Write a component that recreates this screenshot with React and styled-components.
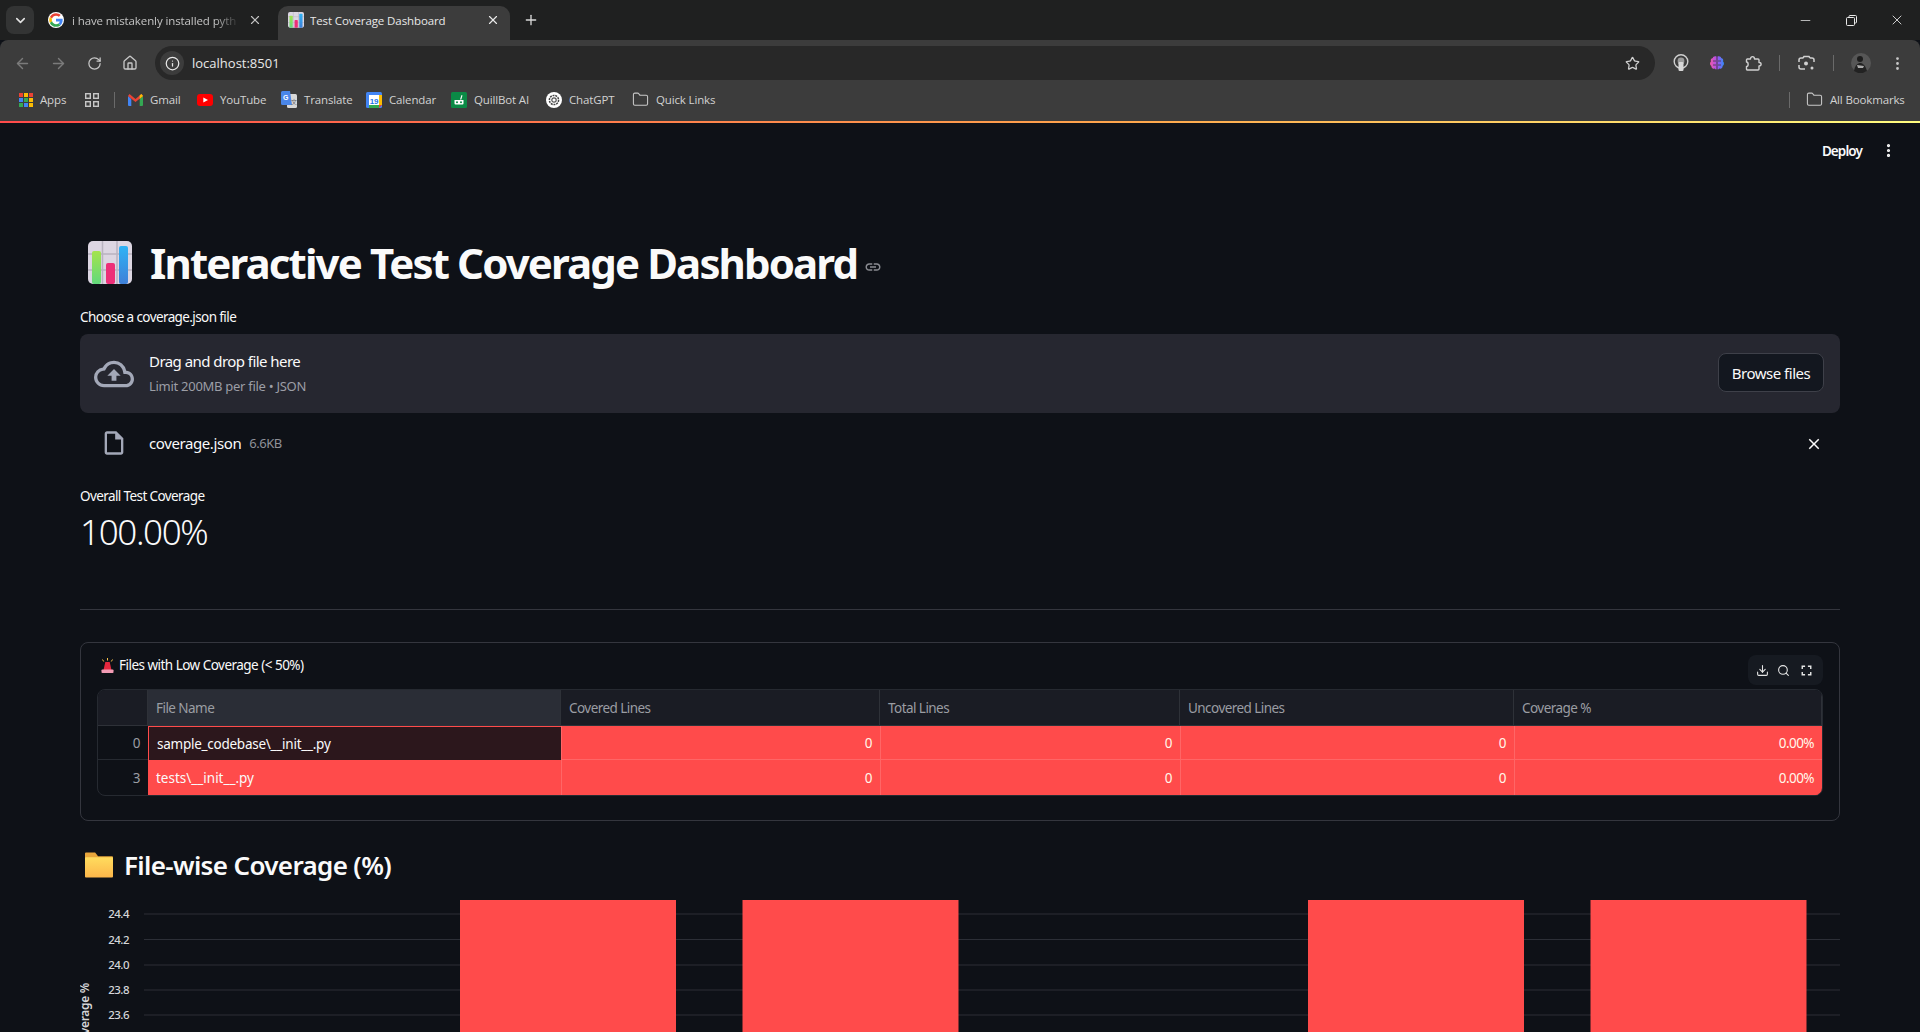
import styled, { createGlobalStyle } from "styled-components";
import {
  ArrowLeft,
  ArrowRight,
  RotateCw,
  House,
  Info,
  Star,
  Folder,
  X,
  Plus,
  ChevronDown,
  Minus,
  EllipsisVertical,
  Search,
} from "lucide-react";
import {
  MdOutlineCloudUpload,
  MdOutlineInsertDriveFile,
  MdClose,
  MdLink,
  MdFullscreen,
} from "react-icons/md";
import { LuDownload } from "react-icons/lu";

const GlobalStyle = createGlobalStyle`
  html, body {
    margin: 0;
    height: 1032px;
    overflow: hidden;
    background: #0e1117;
  }
  * { box-sizing: border-box; }
`;

const APP_FONT = `"Noto Sans", "Open Sans", sans-serif`;
const CHROME_FONT = `"Open Sans", "Noto Sans", sans-serif`;

const Page = styled.div`
  width: 1920px;
  height: 1032px;
  overflow: hidden;
  display: flex;
  flex-direction: column;
  background: #0e1117;
  font-family: ${APP_FONT};
  color: #fafafa;

  & > * {
    flex-shrink: 0;
  }
`;

/* browser frame */
const TabStrip = styled.div`
  height: 40px;
  background: #1f2020;
  display: flex;
  align-items: flex-end;
  padding-left: 6px;
  font-family: ${CHROME_FONT};
`;

const TabSwitcher = styled.div`
  width: 28px;
  height: 28px;
  margin-bottom: 6px;
  border-radius: 8px;
  background: #333434;
  color: #e3e3e3;
  display: flex;
  align-items: center;
  justify-content: center;
`;

const Tab = styled.div`
  width: ${(p) => p.$w}px;
  height: 34px;
  padding: 0 ${(p) => p.$pr}px 6px ${(p) => p.$pl}px;
  border-radius: 10px 10px 0 0;
  background: ${(p) => (p.$active ? "#3c3c3c" : "transparent")};
  display: flex;
  align-items: center;
  gap: ${(p) => (p.$active ? 6 : 8)}px;
  font-size: 11.5px;
  letter-spacing: -0.1px;
  color: ${(p) => (p.$active ? "#e8e8e8" : "#c4c4c4")};
`;

const TabTitle = styled.span`
  flex: 1;
  overflow: hidden;
  white-space: nowrap;
  ${(p) =>
    p.$fade &&
    "mask-image: linear-gradient(90deg, #000 85%, transparent 100%);"}
`;

const NewTab = styled.div`
  margin: 0 0 6px 11px;
  height: 28px;
  width: 20px;
  display: flex;
  align-items: center;
  justify-content: center;
  color: #d8d8d8;
`;

const WindowButtons = styled.div`
  margin-left: auto;
  height: 40px;
  display: flex;
  align-items: center;
  color: #e8e8e8;
`;

const WindowButton = styled.div`
  width: 46px;
  display: flex;
  justify-content: center;
`;

const Toolbar = styled.div`
  height: 40px;
  background: #3c3c3c;
  border-radius: 8px 8px 0 0;
  display: flex;
  align-items: center;
  padding: 6px 0 0 13px;
  font-family: ${CHROME_FONT};
`;

const NavButton = styled.div`
  width: 18px;
  margin-right: ${(p) => p.$mr}px;
  display: flex;
  justify-content: center;
  color: ${(p) => (p.$dim ? "#7b7b7b" : "#c7c7c7")};
`;

const Omnibox = styled.div`
  width: 1500px;
  height: 34px;
  margin-left: 8px;
  border-radius: 17px;
  background: #282828;
  display: flex;
  align-items: center;
  padding: 0 15px 0 5px;
  font-size: 13px;
  color: #e8e8e8;
`;

const SiteInfo = styled.div`
  width: 24px;
  height: 24px;
  margin-right: 8px;
  border-radius: 50%;
  background: #3c3c3c;
  display: flex;
  align-items: center;
  justify-content: center;
`;

const Address = styled.span`
  flex: 1;
`;

const ExtIcons = styled.div`
  display: flex;
  align-items: center;
  color: #c7c7c7;
`;

const ExtIcon = styled.div`
  width: ${(p) => p.$w || 36}px;
  display: flex;
  justify-content: center;
`;

const ToolbarSep = styled.div`
  width: 1px;
  height: 16px;
  background: #6a6a6a;
`;

const Bookmarks = styled.div`
  height: 41px;
  background: #3c3c3c;
  display: flex;
  align-items: center;
  padding: 0 14px 2px 19px;
  font-family: ${CHROME_FONT};
  font-size: 11.5px;
  letter-spacing: -0.15px;
  color: #d2d2d2;
`;

const Bookmark = styled.div`
  width: ${(p) => p.$w}px;
  display: flex;
  align-items: center;
  gap: ${(p) => p.$gap || 7}px;
  white-space: nowrap;
`;

const BookmarkSep = styled.div`
  width: 1px;
  height: 16px;
  background: #6a6a6a;
  margin: ${(p) => p.$m};
`;

const Spacer = styled.div`
  flex: 1;
`;

const GradientLine = styled.div`
  height: 2px;
  background: linear-gradient(90deg, #ff4b4b, #ffa94d 60%, #fffd80);
`;

/* streamlit app */
const AppHeader = styled.div`
  height: 55px;
  display: flex;
  align-items: center;
  justify-content: flex-end;
  padding-right: 23px;
  gap: 18px;
  font-size: 13.5px;
  font-weight: 600;
  letter-spacing: -0.9px;
`;

const Content = styled.main`
  padding: 0 80px;
  display: flex;
  flex-direction: column;
`;

const TitleRow = styled.div`
  margin-top: 62px;
  height: 46px;
  display: flex;
  align-items: center;
  padding-left: 8px;
`;

const Title = styled.h1`
  margin: 0 0 0 18px;
  font-size: 42px;
  line-height: 46px;
  font-weight: 700;
  letter-spacing: -1.88px;
  white-space: nowrap;
`;

const Anchor = styled.span`
  display: flex;
  margin: 8px 0 0 7px;
  color: #8a8c92;
`;

const FieldLabel = styled.div`
  margin-top: 21px;
  height: 20px;
  line-height: 20px;
  font-size: 13.5px;
  letter-spacing: -0.6px;
`;

const Dropzone = styled.div`
  margin-top: 7px;
  height: 79px;
  border-radius: 8px;
  background: #262730;
  display: flex;
  align-items: center;
  padding: 0 16px 0 14px;
`;

const DropIcon = styled.div`
  width: 40px;
  height: 40px;
  margin-right: 15px;
  color: #a3a8b8;
`;

const DropText = styled.div`
  flex: 1;
  display: flex;
  flex-direction: column;
  gap: 4px;
`;

const DropTitle = styled.div`
  font-size: 15px;
  line-height: 21px;
  letter-spacing: -0.55px;
`;

const DropHint = styled.div`
  font-size: 13px;
  line-height: 20px;
  letter-spacing: -0.28px;
  color: #9c9ea6;
`;

const BrowseButton = styled.button`
  width: 106px;
  height: 39px;
  margin-bottom: 2px;
  border: 1px solid #3e4049;
  border-radius: 8px;
  background: #13171f;
  color: #fafafa;
  font-family: ${APP_FONT};
  font-size: 15px;
  letter-spacing: -0.5px;
`;

const FileRow = styled.div`
  margin-top: 13px;
  height: 34px;
  display: flex;
  align-items: center;
  padding: 0 17px 0 20px;
`;

const FileIcon = styled.div`
  width: 28px;
  height: 28px;
  margin-right: 21px;
  color: #a3a8b8;
`;

const FileName = styled.span`
  font-size: 15px;
  letter-spacing: -0.4px;
`;

const FileSize = styled.span`
  margin: 0 0 0 8px;
  font-size: 13px;
  letter-spacing: -0.5px;
  color: #8e9097;
`;

const RemoveFile = styled.div`
  margin: 2px 0 0 auto;
  display: flex;
  color: #fafafa;
`;

const MetricLabel = styled.div`
  margin-top: 26px;
  height: 20px;
  line-height: 20px;
  font-size: 13.5px;
  letter-spacing: -0.6px;
`;

const MetricValue = styled.div`
  margin-top: 3px;
  height: 46px;
  line-height: 46px;
  font-size: 35px;
  font-weight: 300;
  letter-spacing: -1.35px;
`;

const Divider = styled.hr`
  margin: 54px 0 0;
  border: 0;
  border-top: 1px solid #34363e;
`;

const Card = styled.section`
  margin-top: 32px;
  height: 179px;
  border: 1px solid #34363e;
  border-radius: 8px;
  padding: 12px 16px 0;
  display: flex;
  flex-direction: column;
`;

const CardHead = styled.div`
  height: 34px;
  display: flex;
  align-items: flex-start;
`;

const CardTitle = styled.div`
  display: flex;
  align-items: center;
  height: 20px;
  gap: 5px;
  padding-left: 4px;
  font-size: 13.5px;
  letter-spacing: -0.52px;
`;

const TableTools = styled.div`
  margin-left: auto;
  width: 75px;
  height: 30px;
  border-radius: 8px;
  background: #161a21;
  display: flex;
  align-items: center;
  justify-content: space-around;
  padding: 0 4px;
  color: #e6e6e6;
`;

const Grid = styled.div`
  display: grid;
  grid-template-columns: 50px 413px 319px 300px 334px 1fr;
  grid-template-rows: 36px 34px 35px;
  border: 1px solid #262a31;
  border-radius: 8px;
  overflow: hidden;
  font-size: 13.5px;
  letter-spacing: -0.55px;
`;

const HeadCell = styled.div`
  display: flex;
  align-items: center;
  padding: 0 8px;
  background: ${(p) => (p.$sel ? "#2a2d36" : "#1a1c24")};
  color: #9b9da3;
  border-right: 1px solid #2e3138;
  border-bottom: 1px solid #2e3138;
  &:last-child { border-right: 0; }
`;

const IndexCell = styled.div`
  display: flex;
  align-items: center;
  justify-content: flex-end;
  padding: 0 8px;
  color: #9b9da3;
  border-bottom: 1px solid #262a31;
  &:nth-last-child(6) { border-bottom: 0; }
`;

const NameCell = styled.div`
  display: flex;
  align-items: center;
  padding: 0 8px;
  white-space: nowrap;
  letter-spacing: ${(p) => p.$ls}px;
  background: ${(p) => (p.$sel ? "#2c171c" : "#ff4b4b")};
  border: ${(p) => (p.$sel ? "1px solid #ff4b4b" : "0")};
  border-bottom: 0;
  border-right: 0;
  color: #fafafa;
`;

const ValueCell = styled.div`
  display: flex;
  align-items: center;
  justify-content: flex-end;
  padding: 0 8px;
  background: #ff4b4b;
  color: #fff8ea;
  box-shadow: inset 1px 0 0 #ff6666, inset 0 -1px 0 ${(p) => (p.$last ? "#ff4b4b" : "#ff6666")};
`;

const SectionTitle = styled.h3`
  margin: 24px 0 0;
  height: 40px;
  display: flex;
  align-items: center;
  gap: 11px;
  padding-left: 5px;
  font-size: 26px;
  font-weight: 600;
  letter-spacing: -0.65px;
  white-space: nowrap;
`;

const Chart = styled.svg`
  display: block;
  margin-top: 15px;
  flex-shrink: 0;
  font-family: ${APP_FONT};
`;

const GoogleIcon = () => (
  <svg width="16" height="16" viewBox="0 0 48 48">
    <circle cx="24" cy="24" r="24" fill="#fff" />
    <path fill="#EA4335" d="M24 11c3.4 0 6.3 1.2 8.6 3.3l5.5-5.5C34.6 5.6 29.8 3.5 24 3.5 16 3.5 9.1 8.100 5.700 14.800l6.500 5C13.800 14.800 18.500 11 24 11z" />
    <path fill="#4285F4" d="M44 24.500c0-1.400-.1-2.800-.4-4H24v7.700h11.300c-.5 2.600-2 4.800-4.200 6.300l6.400 5C41.300 36 44 30.800 44 24.500z" />
    <path fill="#FBBC05" d="M12.200 28.200c-.4-1.200-.7-2.600-.7-4s.3-2.800.7-4l-6.500-5C4.300 18 3.500 21 3.500 24.200s.8 6.200 2.200 9z" />
    <path fill="#34A853" d="M24 44.500c5.500 0 10.100-1.800 13.500-5l-6.400-5c-1.800 1.200-4.100 2-7.100 2-5.500 0-10.200-3.700-11.800-8.800l-6.500 5C9.100 39.900 16 44.500 24 44.500z" />
  </svg>
);

const ChartEmoji = ({ size }) => (
  <svg width={size} height={size} viewBox="0 0 44 44">
    <defs>
      <linearGradient id="emojiGreen" x1="0" y1="0" x2="0" y2="1">
        <stop offset="0" stopColor="#a4e34c" />
        <stop offset="1" stopColor="#62d97c" />
      </linearGradient>
      <linearGradient id="emojiBlue" x1="0" y1="0" x2="0" y2="1">
        <stop offset="0" stopColor="#2fb3f5" />
        <stop offset="1" stopColor="#3f80d8" />
      </linearGradient>
    </defs>
    <rect width="44" height="43" rx="5" fill="#dcd6e2" />
    <path d="M14.500 0v43M29 0v43M0 13h44M0 29h44" stroke="#b8b3c0" strokeWidth="1.500" />
    <rect x="4" y="10" width="9" height="33" rx="2" fill="url(#emojiGreen)" />
    <rect x="18" y="22" width="9" height="21" rx="2" fill="#ec2f78" />
    <rect x="31" y="5" width="9" height="38" rx="2" fill="url(#emojiBlue)" />
  </svg>
);

const Gmail = () => (
  <svg width="15" height="12" viewBox="0 0 15 12">
    <path d="M0 2v9a1 1 0 001 1h2.300V5z" fill="#4285f4" />
    <path d="M15 2v9a1 1 0 01-1 1h-2.300V5z" fill="#34a853" />
    <path d="M0 2l1.500-2L7.500 5l6-5L15 2l-7.500 6z" fill="#ea4335" />
    <path d="M13.500 0L15 2l-3.300 3V1.200z" fill="#fbbc04" />
  </svg>
);

const YouTube = () => (
  <svg width="16" height="12" viewBox="0 0 16 12">
    <rect width="16" height="12" rx="3" fill="#f00" />
    <path d="M6.300 3.400L11 6 6.300 8.600z" fill="#fff" />
  </svg>
);

const Translate = () => (
  <svg width="16" height="17" viewBox="0 0 16 17">
    <rect x="6" y="3" width="10" height="14" rx="1.500" fill="#d8d8d8" />
    <path d="M1.500 0H9l2 14H1.500A1.500 1.500 0 010 12.500v-11A1.500 1.500 0 011.500 0z" fill="#4a86e8" />
    <text x="2" y="9" fontSize="7" fontWeight="700" fill="#fff" fontFamily="Liberation Sans, sans-serif">G</text>
    <text x="10" y="13" fontSize="6" fill="#666" fontFamily="Noto Sans CJK SC, sans-serif">文</text>
  </svg>
);

const Calendar = () => (
  <svg width="16" height="16" viewBox="0 0 16 16">
    <rect width="16" height="16" rx="1.500" fill="#4285f4" />
    <rect x="3" y="3" width="10" height="10" fill="#fff" />
    <rect x="13" y="3" width="3" height="10" fill="#fbbc04" />
    <rect x="3" y="13" width="10" height="3" fill="#34a853" />
    <path d="M13 13h3l-3 3z" fill="#ea4335" />
    <text x="8" y="11.500" textAnchor="middle" fontSize="8" fontWeight="700" fill="#1a73e8" fontFamily="Liberation Sans, sans-serif">19</text>
  </svg>
);

const QuillBot = () => (
  <svg width="16" height="16" viewBox="0 0 16 16">
    <rect width="16" height="16" rx="1.500" fill="#0b8a46" />
    <path d="M3.500 8h9v3.500a1 1 0 01-1 1h-7a1 1 0 01-1-1zM9 7.500L10.500 3l1 .4-1.200 4.100z" fill="#fff" />
    <circle cx="6" cy="10.200" r="1" fill="#0b8a46" />
    <circle cx="10" cy="10.200" r="1" fill="#0b8a46" />
  </svg>
);

const ChatGpt = () => (
  <svg width="16" height="16" viewBox="0 0 16 16">
    <circle cx="8" cy="8" r="8" fill="#fff" />
    <circle cx="8" cy="8" r="4.600" fill="none" stroke="#444" strokeWidth="1.500" strokeDasharray="2 .8" />
    <circle cx="8" cy="8" r="2.200" fill="none" stroke="#555" strokeWidth="1.200" />
  </svg>
);

const AppsGrid = () => {
  const colors = ["#ea4335", "#fbbc04", "#ea4335", "#4285f4", "#34a853", "#fbbc04", "#34a853", "#4285f4", "#fbbc04"];
  return (
    <svg width="14" height="14" viewBox="0 0 14 14">
      {colors.map((c, i) => (
        <rect key={i} x={(i % 3) * 5} y={Math.floor(i / 3) * 5} width="4" height="4" fill={c} />
      ))}
    </svg>
  );
};

const TabGroups = () => (
  <svg width="14" height="14" viewBox="0 0 14 14" fill="none" stroke="#c7c7c7" strokeWidth="1.400">
    <rect x=".7" y=".7" width="4.600" height="4.600" />
    <rect x="8.700" y=".7" width="4.600" height="4.600" />
    <rect x=".7" y="8.700" width="4.600" height="4.600" />
    <rect x="8.700" y="8.700" width="4.600" height="4.600" />
  </svg>
);

const Bulb = () => (
  <svg width="16" height="18" viewBox="0 0 16 18" fill="none" stroke="#d0d0d0" strokeWidth="1.400">
    <circle cx="8" cy="7.500" r="6.800" />
    <circle cx="8" cy="7" r="3.400" fill="#9c9c9c" stroke="none" />
    <rect x="5.500" y="8" width="5" height="9" rx="1.200" fill="#d8d8d8" stroke="none" />
  </svg>
);

const Brain = () => (
  <svg width="16" height="16" viewBox="0 0 16 16">
    <defs>
      <linearGradient id="brainFill" x1="0" y1="0" x2="1" y2="0">
        <stop offset="0" stopColor="#f05aa8" />
        <stop offset=".5" stopColor="#a84cf0" />
        <stop offset="1" stopColor="#2f8ef5" />
      </linearGradient>
    </defs>
    <path d="M7.500 1.500C5.800.6 4 1.500 3.800 3 2 3.400 1.300 5 2 6.300.6 7.600.7 10 2.300 10.900c0 2 2 3.300 3.500 2.700.6.800 1.300 1 1.700.7zM8.500 1.500c1.700-.9 3.500 0 3.700 1.500 1.800.4 2.500 2 1.800 3.300 1.400 1.300 1.300 3.700-.3 4.600 0 2-2 3.300-3.500 2.700-.6.800-1.300 1-1.700.7z" fill="url(#brainFill)" />
    <path d="M4 6h3M9 6h3M4 10h3M9 10h3" stroke="#3c3c3c" strokeWidth=".8" />
  </svg>
);

const ExtensionPiece = () => (
  <svg width="17" height="17" viewBox="0 0 17 17" fill="none" stroke="#d0d0d0" strokeWidth="1.400" strokeLinejoin="round">
    <path d="M2 4h3.500c0-3.200 4-3.200 4 0H13a1 1 0 011 1v2.500c2.800 0 2.800 3.500 0 3.500v3a1 1 0 01-1 1H2.500a1 1 0 01-1-1v-2.500c2.200 0 2.200-4.500 0-4.500V5A1 1 0 012 4z" />
  </svg>
);

const LensCapture = () => (
  <svg width="17" height="17" viewBox="0 0 17 17" fill="none" stroke="#d0d0d0" strokeWidth="1.500">
    <path d="M5 3H3a2 2 0 00-2 2v2M12 3h2a2 2 0 012 2v2M1 10v2a2 2 0 002 2h4M5 3l1-1.500h5L12 3" />
    <circle cx="8" cy="8.500" r="2" fill="#d0d0d0" stroke="none" />
    <circle cx="14" cy="13" r="1.500" fill="#d0d0d0" stroke="none" />
  </svg>
);

const Avatar = () => (
  <svg width="20" height="20" viewBox="0 0 20 20">
    <circle cx="10" cy="10" r="10" fill="#565656" />
    <circle cx="9" cy="6" r="3" fill="#1d1d1d" />
    <path d="M3 18c1-6 4-8 6-8s5 1 7 8l-4 2H7z" fill="#222" />
    <path d="M6 12l7 1-1 2-5 0z" fill="#aaa" />
  </svg>
);

const AlertEmoji = () => (
  <svg width="13" height="15" viewBox="0 0 13 15">
    <path d="M6.500 0v2.500M1.500 1.500l1.200 2M11.500 1.500l-1.200 2" stroke="#f5c04a" strokeWidth="1" />
    <path d="M4.300 4h4.400L10.500 12h-8z" fill="#e5283e" />
    <rect x="0.500" y="11.500" width="12" height="3.500" rx=".8" fill="#f29bb4" />
  </svg>
);

const FolderEmoji = () => (
  <svg width="28" height="26" viewBox="0 0 29 26">
    <defs>
      <linearGradient id="folderFill" x1="0" y1="0" x2="0" y2="1">
        <stop offset="0" stopColor="#ffdc5e" />
        <stop offset="1" stopColor="#fcb64a" />
      </linearGradient>
    </defs>
    <path d="M1 0h9.500l3 4H28a1 1 0 011 1v3H0V1a1 1 0 011-1z" fill="#e8a63c" />
    <rect y="5" width="29" height="21" rx="1" fill="url(#folderFill)" />
  </svg>
);

const bookmarks = [
  { name: "Gmail", w: 69, icon: <Gmail /> },
  { name: "YouTube", w: 84, icon: <YouTube /> },
  { name: "Translate", w: 85, icon: <Translate /> },
  { name: "Calendar", w: 85, icon: <Calendar /> },
  { name: "QuillBot AI", w: 95, icon: <QuillBot /> },
  { name: "ChatGPT", w: 86, icon: <ChatGpt /> },
  { name: "Quick Links", w: 100, icon: <Folder size={17} strokeWidth={1.5} color="#c7c7c7" /> },
];

const columns = ["File Name", "Covered Lines", "Total Lines", "Uncovered Lines", "Coverage %"];

const rows = [
  { index: 0, name: "sample_codebase\\__init__.py", selected: true, spacing: -0.25 },
  { index: 3, name: "tests\\__init__.py", selected: false, spacing: 0 },
];

const ticks = [
  { label: "24.4", y: 14 },
  { label: "24.2", y: 39.5 },
  { label: "24.0", y: 65 },
  { label: "23.8", y: 90 },
  { label: "23.6", y: 115 },
];

const barStarts = [380, 662.5, 1228, 1510.5];

export default function App() {
  return (
    <Page>
      <GlobalStyle />
      <TabStrip>
        <TabSwitcher>
          <ChevronDown size={15} strokeWidth={2.5} />
        </TabSwitcher>
        <Tab $w={244} $pl={14} $pr={16}>
          <GoogleIcon />
          <TabTitle $fade>i have mistakenly installed pyth</TabTitle>
          <X size={14} />
        </Tab>
        <Tab $w={232} $pl={10} $pr={10} $active>
          <ChartEmoji size={16} />
          <TabTitle>Test Coverage Dashboard</TabTitle>
          <X size={14} />
        </Tab>
        <NewTab>
          <Plus size={16} />
        </NewTab>
        <WindowButtons>
          <WindowButton>
            <Minus size={15} strokeWidth={1.2} />
          </WindowButton>
          <WindowButton>
            <svg width="11" height="11" viewBox="0 0 11 11" fill="none" stroke="currentColor">
              <rect x=".5" y="2.500" width="8" height="8" rx="1" />
              <path d="M3 2.500V1.500a1 1 0 011-1h5.500a1 1 0 011 1V7a1 1 0 01-1 1h-1" />
            </svg>
          </WindowButton>
          <WindowButton>
            <X size={16} strokeWidth={1.3} />
          </WindowButton>
        </WindowButtons>
      </TabStrip>

      <Toolbar>
        <NavButton $dim $mr={18}><ArrowLeft size={17} /></NavButton>
        <NavButton $dim $mr={18}><ArrowRight size={17} /></NavButton>
        <NavButton $mr={18}><RotateCw size={15} /></NavButton>
        <NavButton $mr={8}><House size={16} /></NavButton>
        <Omnibox>
          <SiteInfo><Info size={15} /></SiteInfo>
          <Address>localhost:8501</Address>
          <Star size={15} color="#d0d0d0" />
        </Omnibox>
        <ExtIcons>
          <ExtIcon $w={52}><Bulb /></ExtIcon>
          <ExtIcon $w={20}><Brain /></ExtIcon>
          <ExtIcon $w={52}><ExtensionPiece /></ExtIcon>
          <ToolbarSep />
          <ExtIcon $w={53}><LensCapture /></ExtIcon>
          <ToolbarSep />
          <ExtIcon $w={53}><Avatar /></ExtIcon>
          <ExtIcon $w={20}><EllipsisVertical size={17} /></ExtIcon>
        </ExtIcons>
      </Toolbar>

      <Bookmarks>
        <Bookmark $w={66}><AppsGrid />Apps</Bookmark>
        <TabGroups />
        <BookmarkSep $m="0 13px 0 15px" />
        {bookmarks.map((b) => (
          <Bookmark key={b.name} $w={b.w}>
            {b.icon}
            {b.name}
          </Bookmark>
        ))}
        <Spacer />
        <BookmarkSep $m="0 16px 0 0" />
        <Bookmark $w={100}>
          <Folder size={17} strokeWidth={1.5} color="#c7c7c7" />
          All Bookmarks
        </Bookmark>
      </Bookmarks>
      <GradientLine />

      <AppHeader>
        <span>Deploy</span>
        <EllipsisVertical size={17} strokeWidth={2.5} />
      </AppHeader>

      <Content>
        <TitleRow>
          <ChartEmoji size={44} />
          <Title>Interactive Test Coverage Dashboard</Title>
          <Anchor><MdLink size={18} /></Anchor>
        </TitleRow>

        <FieldLabel>Choose a coverage.json file</FieldLabel>
        <Dropzone>
          <DropIcon><MdOutlineCloudUpload size={40} /></DropIcon>
          <DropText>
            <DropTitle>Drag and drop file here</DropTitle>
            <DropHint>Limit 200MB per file • JSON</DropHint>
          </DropText>
          <BrowseButton>Browse files</BrowseButton>
        </Dropzone>

        <FileRow>
          <FileIcon><MdOutlineInsertDriveFile size={28} /></FileIcon>
          <FileName>coverage.json</FileName>
          <FileSize>6.6KB</FileSize>
          <RemoveFile><MdClose size={18} /></RemoveFile>
        </FileRow>

        <MetricLabel>Overall Test Coverage</MetricLabel>
        <MetricValue>100.00%</MetricValue>
        <Divider />

        <Card>
          <CardHead>
            <CardTitle>
              <AlertEmoji />
              Files with Low Coverage (&lt; 50%)
            </CardTitle>
            <TableTools>
              <LuDownload size={13} />
              <Search size={13} />
              <MdFullscreen size={17} />
            </TableTools>
          </CardHead>
          <Grid>
            <HeadCell />
            {columns.map((c, i) => (
              <HeadCell key={c} $sel={i === 0}>{c}</HeadCell>
            ))}
            {rows.map((r, ri) => (
              <RowCells key={r.index} row={r} last={ri === rows.length - 1} />
            ))}
          </Grid>
        </Card>

        <SectionTitle>
          <FolderEmoji />
          File-wise Coverage (%)
        </SectionTitle>

        <Chart width="1760" height="140" viewBox="0 0 1760 140">
          {ticks.map((t) => (
            <g key={t.label}>
              <line x1="64" x2="1760" y1={t.y} y2={t.y} stroke="#2c2f37" />
              <text x="49" y={t.y + 4} textAnchor="end" fontSize="11.500" fontWeight="500" letterSpacing="-.5" fill="#d5d6d9">
                {t.label}
              </text>
            </g>
          ))}
          {barStarts.map((x) => (
            <rect key={x} x={x} y="0" width="216" height="140" fill="#ff4b4b" />
          ))}
          <text transform="translate(9 83) rotate(-90)" textAnchor="end" fontSize="12" fontWeight="600" letterSpacing="-.3" fill="#d5d6d9">
            Coverage %
          </text>
        </Chart>
      </Content>
    </Page>
  );
}

function RowCells({ row, last }) {
  return (
    <>
      <IndexCell>{row.index}</IndexCell>
      <NameCell $sel={row.selected} $ls={row.spacing}>{row.name}</NameCell>
      <ValueCell $last={last}>0</ValueCell>
      <ValueCell $last={last}>0</ValueCell>
      <ValueCell $last={last}>0</ValueCell>
      <ValueCell $last={last}>0.00%</ValueCell>
    </>
  );
}
